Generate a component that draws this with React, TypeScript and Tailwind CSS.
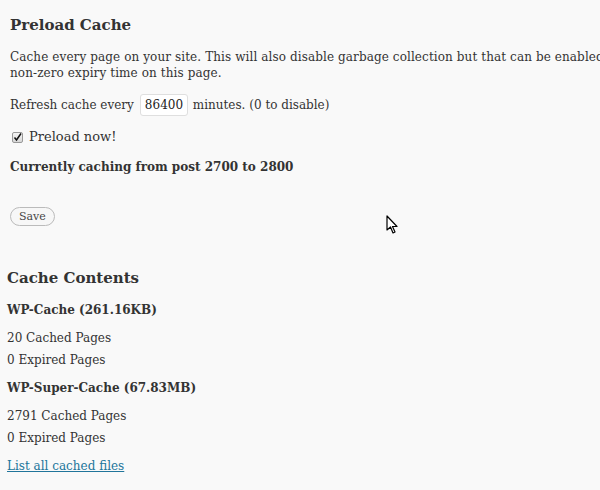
import React, { useState } from "react";

const serif = { fontFamily: '"DejaVu Serif", serif' };

export default function App() {
  const [preload, setPreload] = useState(true);
  const [minutes, setMinutes] = useState("86400");

  return (
    <div
      className="w-[600px] h-[490px] overflow-hidden bg-[#f9f9f9] text-[#333] text-[12px] leading-[16px] relative"
      style={serif}
    >
      {/* Preload section */}
      <div className="pl-[10px] pt-[15px]">
        <h3 className="text-[15px] leading-[20px] font-bold text-[#333]">Preload Cache</h3>
        <p className="mt-[14px] whitespace-nowrap tracking-[0.1px]">
          Cache every page on your site. This will also disable garbage collection but that can be enabled
          <br />
          non-zero expiry time on this page.
        </p>
        <div className="mt-[13px] flex items-center h-[22px]">
          <span>Refresh cache every</span>
          <input
            value={minutes}
            onChange={(e) => setMinutes(e.target.value)}
            className="ml-[6px] mr-[5px] w-[48px] h-[22px] px-[4px] bg-white border border-[#dfdfdf] rounded-[3px] text-[12px] text-[#222] outline-none"
            style={serif}
          />
          <span>minutes. (0 to disable)</span>
        </div>
        <label className="mt-[12px] flex items-center h-[18px] text-[13px] cursor-pointer" onClick={() => setPreload(!preload)}>
          <span className="ml-[2px] mr-[6px] w-[11px] h-[11px] border border-[#999] rounded-[2px] bg-gradient-to-b from-[#f4f4f4] to-[#d8d8d8] flex items-center justify-center">
            {preload && (
              <svg width="9" height="9" viewBox="0 0 9 9">
                <path d="M1.5 4.5 L3.5 7 L8 0.5" fill="none" stroke="#111" strokeWidth="1.5" />
              </svg>
            )}
          </span>
          Preload now!
        </label>
        <p className="mt-[13px] font-bold">Currently caching from post 2700 to 2800</p>
        <button
          className="mt-[32px] h-[19px] px-[8px] rounded-full border border-[#bbb] bg-[#f7f7f7] text-[11px] text-[#464646]"
          style={serif}
        >
          Save
        </button>
      </div>

      {/* Contents section */}
      <div className="pl-[7px] mt-[42px]">
        <h3 className="text-[15px] leading-[20px] font-bold">Cache Contents</h3>
        <h4 className="mt-[14px] font-bold">WP-Cache (261.16KB)</h4>
        <p className="mt-[12px]">20 Cached Pages</p>
        <p className="mt-[6px]">0 Expired Pages</p>
        <h4 className="mt-[12px] font-bold">WP-Super-Cache (67.83MB)</h4>
        <p className="mt-[12px]">2791 Cached Pages</p>
        <p className="mt-[6px]">0 Expired Pages</p>
        <a href="#" className="mt-[12px] inline-block text-[#21759b] underline">
          List all cached files
        </a>
      </div>

      {/* mouse cursor */}
      <svg className="absolute left-[386px] top-[215px]" width="13" height="20" viewBox="0 0 13 20">
        <path d="M1 1 L1 15 L4.5 12 L7 18 L9 17 L6.5 11.5 L11 11.5 Z" fill="#fff" stroke="#000" strokeWidth="1.2" strokeLinejoin="round" />
      </svg>
    </div>
  );
}
